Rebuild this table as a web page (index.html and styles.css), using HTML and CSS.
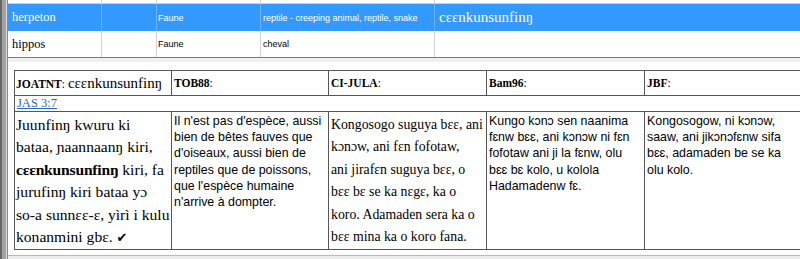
FILE: index.html
```html
<!DOCTYPE html>
<html lang="fr">
<head>
<meta charset="utf-8">
<title>Lexique</title>
<link rel="stylesheet" href="styles.css">
</head>
<body>
<div class="app">
  <div class="edge"></div>
  <div class="main">
    <div class="grid">
      <div class="grid-row stub">
        <div class="cell"></div><div class="cell"></div><div class="cell"></div><div class="cell"></div><div class="cell last"></div>
      </div>
      <div class="grid-row selected">
        <div class="cell word">herpeton</div>
        <div class="cell"></div>
        <div class="cell sans">Faune</div>
        <div class="cell sans gloss">reptile - creeping animal, reptile, snake</div>
        <div class="cell big last">cɛɛnkunsunfinŋ</div>
      </div>
      <div class="grid-row">
        <div class="cell word">hippos</div>
        <div class="cell"></div>
        <div class="cell sans">Faune</div>
        <div class="cell sans gloss">cheval</div>
        <div class="cell big last"></div>
      </div>
    </div>
    <div class="band"></div>
    <div class="panel">
      <table class="verses">
        <colgroup>
          <col class="c1"><col class="c2"><col class="c3"><col class="c4"><col class="c5">
        </colgroup>
        <tr class="hd">
          <td><b>JOATNT</b>: <span class="hw">cɛɛnkunsunfinŋ</span></td>
          <td><b>TOB88</b>:</td>
          <td><b>CI-JULA</b>:</td>
          <td><b>Bam96</b>:</td>
          <td><b>JBF</b>:</td>
        </tr>
        <tr class="ref">
          <td colspan="5"><a href="#">JAS 3:7</a></td>
        </tr>
        <tr class="body">
          <td class="serif-lg">Juunfinŋ kwuru ki<br>bataa, ɲaannaanŋ kiri,<br><b>cɛɛnkunsunfinŋ</b> kiri, fa<br>jurufinŋ kiri bataa yɔ<br>so-a sunnɛɛ-ɛ, yìrì i kulu<br>konanmini gbɛ. <span class="check">✔</span></td>
          <td class="sans-txt">Il n'est pas d'espèce, aussi bien de bêtes fauves que d'oiseaux, aussi bien de reptiles que de poissons, que l'espèce humaine n'arrive à dompter.</td>
          <td class="serif-sm">Kongosogo suguya bɛɛ, ani<br>kɔnɔw, ani fɛn fofotaw,<br>ani jirafɛn suguya bɛɛ, o<br>bɛɛ bɛ se ka nɛgɛ, ka o<br>koro. Adamaden sera ka o<br>bɛɛ mina ka o koro fana.</td>
          <td class="sans-txt">Kungo kɔnɔ sen naanima fɛnw bɛɛ, ani kɔnɔw ni fɛn fofotaw ani ji la fɛnw, olu bɛɛ bɛ kolo, u kolola Hadamadenw fɛ.</td>
          <td class="sans-txt">Kongosogow, ni kɔnɔw, saaw, ani jikɔnɔfɛnw sifa bɛɛ, adamaden be se ka olu kolo.</td>
        </tr>
      </table>
    </div>
    <div class="footer"></div>
  </div>
</div>
</body>
</html>
```

FILE: styles.css
```css
html, body {
  margin: 0;
  padding: 0;
}
body {
  width: 800px;
  height: 259px;
  overflow: hidden;
  background: #ffffff;
  font-family: "Liberation Serif", "DejaVu Serif", serif;
  color: #000;
}
.app {
  display: flex;
  height: 259px;
}
.edge {
  width: 8px;
  flex: none;
  background: linear-gradient(to right,
    #666666 0, #666666 2px,
    #a2a2a2 2px, #a2a2a2 6px,
    #dadada 6px, #dadada 7px,
    #8a8a8a 7px, #8a8a8a 8px);
}
.main {
  flex: 1;
  min-width: 0;
  overflow: hidden;
  display: flex;
  flex-direction: column;
}

/* top list */
.grid {
  border-bottom: 1px solid #7c7c7c;
}
.grid-row {
  display: grid;
  grid-template-columns: 94px 55px 104px 174px 1fr;
  height: 26px;
}
.grid-row.stub {
  height: 4px;
  border-bottom: 1px solid #cfcfcf;
  box-sizing: border-box;
}
.grid-row.selected {
  height: 27px;
  background: #3399ff;
  color: #ffffff;
}
.cell {
  box-sizing: border-box;
  border-right: 1px solid #d2d2d2;
  display: flex;
  align-items: center;
  white-space: nowrap;
  overflow: hidden;
  padding-left: 1px;
}
.selected .cell {
  border-right-color: #6db3fb;
}
.cell.last {
  border-right: none;
}
.cell.word {
  font-family: "Liberation Serif", serif;
  font-size: 12.5px;
  padding-left: 4px;
}
.cell.sans {
  font-family: "Liberation Sans", Arial, sans-serif;
  font-size: 9px;
}
.cell.gloss {
  padding-left: 2px;
}
.cell.big {
  font-family: "Liberation Serif", serif;
  font-size: 15px;
  padding-left: 4px;
}

.band {
  height: 4px;
  background: #f0f0f0;
  flex: none;
}

/* verse comparison panel */
.panel {
  height: 193px;
  flex: none;
  box-sizing: border-box;
  padding: 8px 0 0 6px;
  overflow: hidden;
}
.verses {
  border-collapse: collapse;
  table-layout: fixed;
  width: 789px;
}
.c1, .c2 { width: 157px; }
.c3, .c4, .c5 { width: 158px; }
.verses td {
  border: 1px solid #555555;
  vertical-align: top;
  padding: 0 2px;
  overflow: hidden;
}
.hd td {
  height: 24px;
  vertical-align: middle;
  font-size: 11.5px;
  white-space: nowrap;
  padding: 0 2px;
}
.hd td:first-child {
  padding-left: 1px;
}
.hw {
  font-size: 15px;
}
.ref td {
  height: 15px;
  padding: 0 2px;
  font-size: 12.5px;
  line-height: 15px;
  vertical-align: middle;
}
.ref a {
  color: #2468cc;
  text-decoration: underline;
}
.body td {
  padding-top: 2px;
}
.serif-lg {
  font-size: 15.6px;
  line-height: 22.4px;
  white-space: nowrap;
}
.serif-lg b {
  letter-spacing: -0.2px;
}
.body td.serif-lg {
  padding-left: 1px;
}
.serif-sm {
  font-size: 13.8px;
  line-height: 22.4px;
  white-space: nowrap;
}
.sans-txt {
  font-family: "Liberation Sans", Arial, "DejaVu Sans", sans-serif;
  font-size: 12.4px;
  line-height: 16.2px;
}
.body td.sans-txt {
  padding-top: 1px;
}
.check {
  font-family: "DejaVu Sans", sans-serif;
  font-size: 13px;
}

.footer {
  flex: 1;
  border-top: 1px solid #b8b8b8;
  background: #ececec;
}
```
